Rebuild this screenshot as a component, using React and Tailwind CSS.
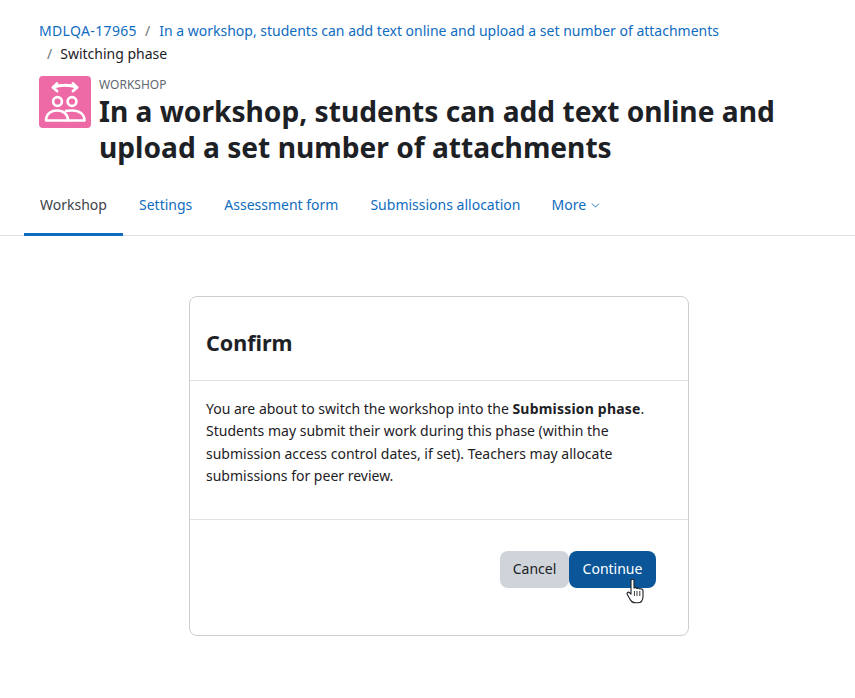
import React from "react";
import { ChevronDown } from "lucide-react";

const WorkshopIcon = () => (
  <svg viewBox="0 0 52 52" className="w-[52px] h-[52px]" fill="none" stroke="#fff" strokeWidth="2.6">
    <path d="M14 11.5 C21 8.5 31 8.5 38 11.5" strokeWidth="2.8" strokeLinecap="round" />
    <path d="M18 7.5 L14 11.5 L18 15 M34 7.5 L38 11.5 L34 15" strokeWidth="2.8" strokeLinecap="round" strokeLinejoin="round" />
    <circle cx="18.5" cy="25.5" r="4.4" />
    <circle cx="33" cy="25.5" r="4.4" />
    <path d="M7 44.5 C7 37 13 34.5 18 34.5 C24 34.5 29 38 29 44.5 Z" strokeLinejoin="round" />
    <path d="M26 35 C28.5 34.5 31 34.5 33 34.5 C40 34.5 45.5 38 45.5 44.5 H29" strokeLinejoin="round" />
  </svg>
);

const HandCursor = () => (
  <svg viewBox="0 0 18 26" className="absolute left-[626px] top-[578px] w-[18px] h-[26px]">
    <path
      d="M5 2.5 C5 0.8 8 0.8 8 2.5 L8 10 C9 9.4 10.4 9.5 10.9 10.4 C12 9.9 13.4 10.1 13.8 11 C15 10.6 17 11 17 12.6 L17 18.5 C17 22 15.4 24.8 11.6 24.8 L9 24.8 C6 24.8 5 23 4 21.2 L1.3 16.4 C0.4 14.8 2.4 13.4 3.7 14.8 L5 16.2 Z"
      fill="#fff"
      stroke="#1d2125"
      strokeWidth="1.1"
      strokeLinejoin="round"
    />
    <path d="M8.4 13 V18 M11 13 V18 M13.8 13 V18" stroke="#1d2125" strokeWidth="0.9" />
  </svg>
);

const tabs = ["Settings", "Assessment form", "Submissions allocation"];

export default function App() {
  return (
    <div className="relative w-[855px] h-[698px] overflow-hidden bg-white text-[14px] leading-[22.5px] text-[#1d2125] font-['Noto_Sans','Open_Sans',sans-serif]">
      <div className="pt-[20px] pl-[39px] pr-[100px]">
        <div>
          <a className="text-[#0f6cbf] tracking-[0.35px]">MDLQA-17965</a>
          <span className="text-[#6a737b] pl-[8px] pr-[9px]">/</span>
          <a className="text-[#0f6cbf]">In a workshop, students can add text online and upload a set number of attachments</a>
        </div>
        <div>
          <span className="text-[#6a737b] px-[8px]">/</span>
          <span>Switching phase</span>
        </div>
      </div>

      <div className="flex gap-2 pl-[39px] pr-[50px] mt-[11px]">
        <div className="w-[52px] h-[52px] shrink-0 rounded-[4px] bg-[#ee6aa6]">
          <WorkshopIcon />
        </div>
        <div>
          <div className="text-[12px] leading-[18px] text-[#5f6870]">WORKSHOP</div>
          <h1 className="font-bold text-[28.15px] leading-[36px] -mt-[1.5px]">
            In a workshop, students can add text online and upload a set number of attachments
          </h1>
        </div>
      </div>

      <nav className="flex mt-[17px] mx-0 pl-[24px] h-[54px] border-b border-[#dee2e6]">
        <div className="w-[99px] h-[54px] border-b-[3px] border-[#0f6cbf] flex items-start justify-center pt-[12px] text-[#3c4349]">Workshop</div>
        {tabs.map((t) => (
          <div key={t} className="px-[16px] pt-[12px] text-[#0f6cbf]">{t}</div>
        ))}
        <div className="pl-[15px] pt-[12px] text-[#0f6cbf] flex items-start gap-[3px]">
          More <ChevronDown className="w-[13px] h-[13px] mt-[5px]" strokeWidth={1.6} />
        </div>
      </nav>

      <section className="w-[500px] h-[340px] ml-[189px] mt-[60px] border border-[#cccfd2] rounded-[8px] flex flex-col">
        <div className="h-[84px] border-b border-[#dee2e6] flex items-center pl-[16px] pt-[9px]">
          <h2 className="font-bold text-[21.5px] leading-[28px]">Confirm</h2>
        </div>
        <div className="h-[139px] border-b border-[#dee2e6] px-[16px] pt-[17.4px]">
          You are about to switch the workshop into the <b className="tracking-[0.2px]">Submission phase</b>. Students may submit their work during this phase (within the submission access control dates, if set). Teachers may allocate submissions for peer review.
        </div>
        <div className="flex justify-end pr-[32px] pt-[31px]">
          <button className="h-[37px] w-[69px] pt-px rounded-[8px] bg-[#ced4da] text-[#1d2125]">Cancel</button>
          <button className="h-[37px] w-[87px] pt-px rounded-[8px] bg-[#0a5699] text-white">Continue</button>
        </div>
      </section>

      <HandCursor />
    </div>
  );
}
